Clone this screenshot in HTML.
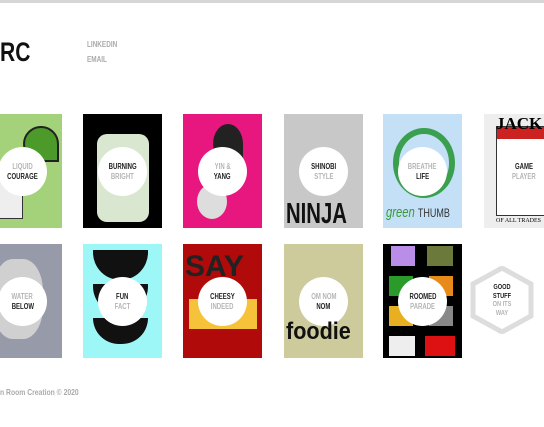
<!DOCTYPE html>
<html><head><meta charset="utf-8"><style>
*{margin:0;padding:0;box-sizing:border-box}
body{width:544px;height:427px;overflow:hidden;background:#fff;position:relative;font-family:"Liberation Sans",sans-serif;}
.top{position:absolute;left:0;top:0;width:544px;height:3px;background:#d6d6d6}
.logo{position:absolute;left:0;top:37px;font-size:27px;font-weight:bold;color:#111;transform:scaleX(.78);transform-origin:left}
.nav{position:absolute;left:87px;font-size:8px;font-weight:bold;color:#aaa;transform:scaleX(.8);transform-origin:left}
.card{position:absolute;width:79px;height:114px;overflow:hidden}
.c{position:absolute;left:15px;top:33px;width:49px;height:49px;border-radius:50%;background:#fff;display:flex;flex-direction:column;align-items:center;justify-content:center;font-size:8px;font-weight:bold;line-height:9.5px;text-align:center}
.c span{display:block;transform:scaleX(.75);white-space:nowrap}
.d{color:#222}.g{color:#b5b5b5}
.foot{position:absolute;left:0;top:387px;font-size:8.5px;font-weight:bold;color:#aaa;transform:scaleX(.8);transform-origin:left}
</style></head><body>
<div class="top"></div>
<div class="logo">RC</div>
<div class="nav" style="top:40px">LINKEDIN</div>
<div class="nav" style="top:55px">EMAIL</div>

<div class="card" style="left:-17px;top:114px;background:#a3d27a">
 <div style="position:absolute;left:40px;top:12px;width:36px;height:36px;border-radius:50% 50% 0 50%;background:#4c9a2a;border:2px solid #222"></div>
 <div style="position:absolute;left:0;top:50px;width:40px;height:55px;background:#eee;border:1px solid #333"></div>
 <div class="c"><span class="g">LIQUID</span><span class="d">COURAGE</span></div></div>
<div class="card" style="left:83px;top:114px;background:#000">
 <div style="position:absolute;left:14px;top:20px;width:52px;height:88px;border-radius:10px;background:#d9e6d0"></div>
 <div class="c"><span class="d">BURNING</span><span class="g">BRIGHT</span></div></div>
<div class="card" style="left:183px;top:114px;background:#e8177f">
 <div style="position:absolute;left:30px;top:10px;width:30px;height:40px;border-radius:50% 50% 0 50%;background:#222"></div>
 <div style="position:absolute;left:14px;top:70px;width:30px;height:35px;border-radius:50%;background:#ddd"></div>
 <div class="c"><span class="g">YIN &amp;</span><span class="d">YANG</span></div></div>
<div class="card" style="left:284px;top:114px;background:#c8c8c8">
 <div class="c"><span class="d">SHINOBI</span><span class="g">STYLE</span></div>
 <div style="position:absolute;left:2px;top:84px;font-size:29px;font-weight:bold;color:#111;transform:scaleX(.7);transform-origin:left;white-space:nowrap">NINJA</div></div>
<div class="card" style="left:383px;top:114px;background:#c4e0f7">
 <div style="position:absolute;left:10px;top:14px;width:62px;height:70px;border-radius:50%;border:6px solid #3aa050"></div>
 <div class="c"><span class="g">BREATHE</span><span class="d">LIFE</span></div>
 <div style="position:absolute;left:3px;top:90px;font-size:15px;color:#3a9a3a;font-style:italic;white-space:nowrap;transform:scaleX(.75);transform-origin:left">green <span style="color:#333;font-size:12px;font-style:normal">THUMB</span></div></div>
<div class="card" style="left:484px;top:114px;background:#eee">
 <div style="position:absolute;left:12px;top:12px;width:56px;height:90px;background:#fff;border:1px solid #333"><div style="height:12px;background:#c22"></div></div>
 <div style="position:absolute;left:12px;top:0;font-size:17px;font-family:'Liberation Serif',serif;font-weight:bold">JACK</div>
 <div class="c"><span class="d">GAME</span><span class="g">PLAYER</span></div>
 <div style="position:absolute;left:12px;top:104px;font-size:6px;font-family:'Liberation Serif',serif">OF ALL TRADES</div></div>

<div class="card" style="left:-17px;top:244px;background:#979aa8">
 <div style="position:absolute;left:10px;top:15px;width:50px;height:80px;border-radius:40%;background:#d0d0d0"></div>
 <div class="c"><span class="g">WATER</span><span class="d">BELOW</span></div></div>
<div class="card" style="left:83px;top:244px;background:#9ef7f7">
 <div style="position:absolute;left:10px;top:6px;width:55px;height:30px;border-radius:0 0 30px 30px;background:#111"></div>
 <div style="position:absolute;left:10px;top:40px;width:55px;height:30px;border-radius:0 0 30px 30px;background:#111"></div>
 <div style="position:absolute;left:10px;top:74px;width:55px;height:26px;border-radius:0 0 30px 30px;background:#111"></div>
 <div class="c"><span class="d">FUN</span><span class="g">FACT</span></div></div>
<div class="card" style="left:183px;top:244px;background:#b00a0a">
 <div style="position:absolute;left:2px;top:6px;font-size:30px;font-weight:bold;color:#222">SAY</div>
 <div style="position:absolute;left:6px;top:55px;width:68px;height:30px;background:#f5c23a"></div>
 <div class="c"><span class="d">CHEESY</span><span class="g">INDEED</span></div></div>
<div class="card" style="left:284px;top:244px;background:#cdca9c">
 <div class="c"><span class="g">OM NOM</span><span class="d">NOM</span></div>
 <div style="position:absolute;left:2px;top:74px;font-size:24px;font-weight:bold;color:#111;transform:scaleX(.9);transform-origin:left">foodie</div></div>
<div class="card" style="left:383px;top:244px;background:#000">
 <div style="position:absolute;left:8px;top:2px;width:24px;height:20px;background:#b98de8"></div>
 <div style="position:absolute;left:44px;top:2px;width:26px;height:20px;background:#6b7a3a"></div>
 <div style="position:absolute;left:6px;top:32px;width:24px;height:20px;background:#2a9a2a"></div>
 <div style="position:absolute;left:46px;top:32px;width:24px;height:20px;background:#e88a1a"></div>
 <div style="position:absolute;left:6px;top:62px;width:24px;height:20px;background:#e8b020"></div>
 <div style="position:absolute;left:46px;top:62px;width:24px;height:20px;background:#888"></div>
 <div style="position:absolute;left:6px;top:92px;width:26px;height:20px;background:#eee"></div>
 <div style="position:absolute;left:42px;top:92px;width:30px;height:20px;background:#d11"></div>
 <div class="c"><span class="d">ROOMED</span><span class="g">PARADE</span></div></div>

<svg style="position:absolute;left:470px;top:266px" width="64" height="68" viewBox="0 0 64 68">
 <polygon points="32,2 61,18 61,50 32,66 3,50 3,18" fill="#fff" stroke="#ddd" stroke-width="5"/>
</svg>
<div style="position:absolute;left:482px;top:283px;width:40px;text-align:center;font-size:7.5px;font-weight:bold;line-height:8.5px"><div class="d" style="transform:scaleX(.75)">GOOD</div><div class="d" style="transform:scaleX(.75)">STUFF</div><div class="g" style="transform:scaleX(.75)">ON ITS</div><div class="g" style="transform:scaleX(.75)">WAY</div></div>

<div class="foot">n Room Creation © 2020</div>
</body></html>
